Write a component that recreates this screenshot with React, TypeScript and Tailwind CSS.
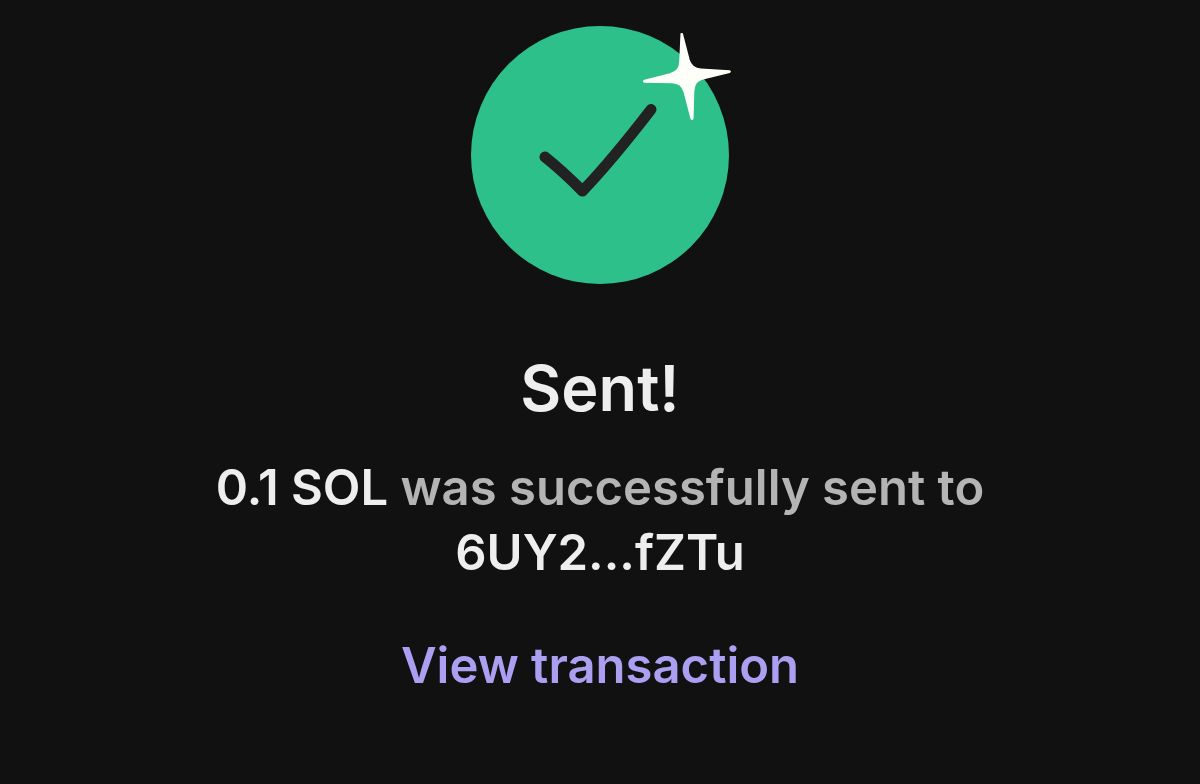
import React from 'react';

interface Transfer {
  amount: string;
  recipient: string;
}

const transfer: Transfer = {
  amount: '0.1 SOL',
  recipient: '6UY2...fZTu',
};

const SuccessIcon = () => (
  <svg className="h-70 w-70 shrink-0" viewBox="0 0 280 280" fill="none" aria-hidden="true">
    <circle cx="140" cy="140" r="129" fill="#2ec08b" />
    <path
      d="M85 142 C97 151.500 111 164.500 122.500 176 C146 151.500 171 120.500 191 94.500"
      stroke="#222222"
      strokeWidth="11"
      strokeLinecap="round"
      strokeLinejoin="round"
    />
    <path
      d="M222.200 18.800 L229 45 C231 51.500 234.500 54 241 54.200 L269.500 55.900 C270.300 56.200 270.300 57 269.500 57.300 L244 63.600 C236.500 65.500 234 69 233.600 76 L232.800 103.500 C232.500 104.500 231.500 104.500 231.200 103.500 L224.300 77 C222.500 70.500 219 67.800 212 67.600 L184.500 67 C183.500 66.700 183.500 65.700 184.500 65.400 L210 59 C217 57 219.800 53.500 220 46 L221.200 18.800 Z"
      fill="#fffffa"
      stroke="#fffffa"
      strokeWidth="1.500"
      strokeLinejoin="round"
    />
  </svg>
);

const App = () => {
  return (
    <main className="flex min-h-screen flex-col items-center bg-[#111111] px-6 pt-[15px] pb-20 text-center font-['Inter',sans-serif]">
      <SuccessIcon />
      <h1 className="mt-14 text-[63px] leading-[74px] font-semibold text-[#eeeeee]">Sent!</h1>
      <p className="mt-[30px] max-w-[860px] text-[49px] leading-[65px] font-semibold text-[#b4b4b4]">
        <span className="text-[#eeeeee]">{transfer.amount}</span> was successfully sent to{' '}
        <span className="text-[#eeeeee]">{transfer.recipient}</span>
      </p>
      <a href="#transaction" className="mt-12 text-[49px] leading-[65px] font-semibold text-[#ab9ff2]">
        View transaction
      </a>
    </main>
  );
};

export default App;
